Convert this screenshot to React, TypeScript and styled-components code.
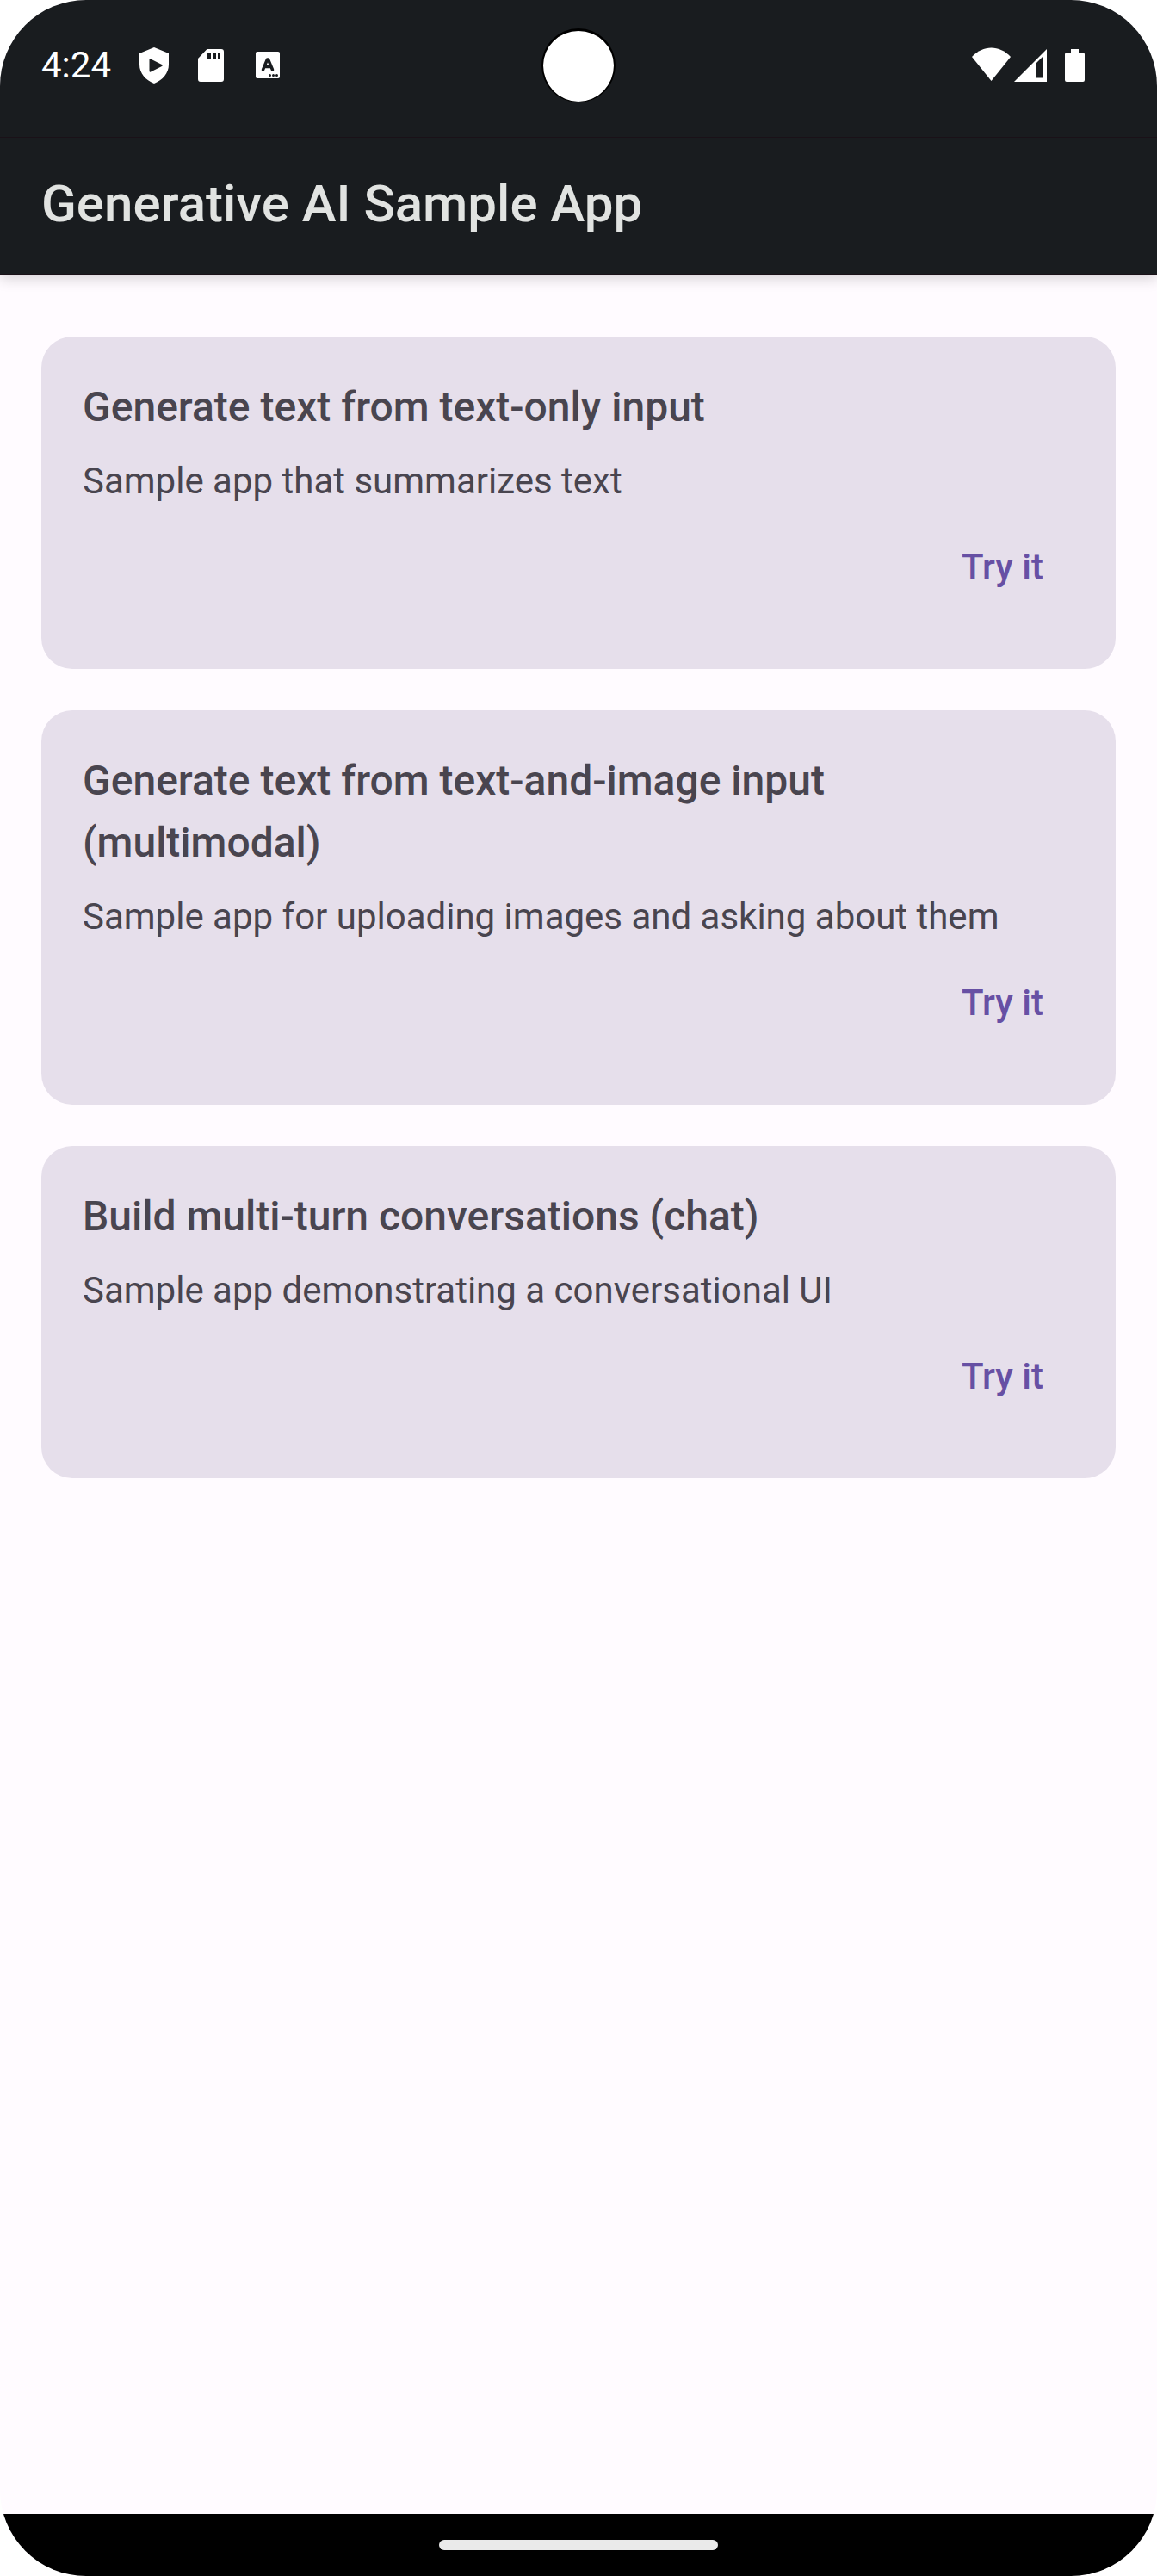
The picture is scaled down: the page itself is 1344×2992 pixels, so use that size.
import React from "react";
import styled, { createGlobalStyle } from "styled-components";

const GlobalStyle = createGlobalStyle`
  * { box-sizing: border-box; }
  body {
    margin: 0;
    background: #ffffff;
    font-family: Roboto, "Liberation Sans", sans-serif;
  }
`;

const Screen = styled.div`
  display: flex;
  flex-direction: column;
  min-height: 100vh;
  overflow: hidden;
  border-radius: 100px;
  background: #fffbff;
`;

const TopArea = styled.header`
  background: #191c1f;
  box-shadow: 0 5px 15px rgba(0, 0, 0, 0.16);
`;

const StatusBar = styled.div`
  display: grid;
  grid-template-columns: 1fr auto 1fr;
  align-items: center;
  height: 160px;
  padding: 0 48px;
  border-bottom: 1px solid #1a1118;
  color: #ffffff;
`;

const StatusGroup = styled.div<{ $end?: boolean }>`
  display: flex;
  align-items: center;
  justify-content: ${(p) => (p.$end ? "flex-end" : "flex-start")};
  padding-right: ${(p) => (p.$end ? "24px" : "0")};
  padding-bottom: 8px;
`;

const Clock = styled.time`
  margin-right: 29px;
  font-size: 42px;
  line-height: 50px;
`;

const StatusIcon = styled.svg`
  display: block;
  flex: none;
  fill: currentColor;
`;

const CameraCutout = styled.div`
  width: 86px;
  height: 86px;
  margin-bottom: 8px;
  border: solid #000000;
  border-width: 3px 2px 1px;
  border-radius: 50%;
  background: #ffffff;
`;

const AppBar = styled.div`
  display: flex;
  align-items: center;
  height: 159px;
  padding: 0 48px 4px;
  border-bottom: 1px solid #1a1118;
`;

const AppTitle = styled.h1`
  margin: 0;
  color: #e1e3e1;
  font-size: 60px;
  font-weight: 500;
  line-height: 72px;
`;

const CardList = styled.main`
  display: flex;
  flex: 1;
  flex-direction: column;
  gap: 48px;
  padding: 72px 48px;
`;

const Card = styled.article`
  display: flex;
  flex-direction: column;
  padding: 46px 48px 48px;
  border-radius: 36px;
  background: #e6dfeb;
  color: #49454f;
`;

const CardTitle = styled.h2`
  margin: 0;
  padding-right: 48px;
  font-size: 48px;
  font-weight: 500;
  line-height: 72px;
`;

const CardText = styled.p`
  margin: 20px 0 0;
  font-size: 42px;
  line-height: 60px;
`;

const TryButton = styled.button`
  align-self: flex-end;
  height: 120px;
  margin: 10px 0;
  padding: 0 36px;
  border: 0;
  background: transparent;
  color: #6750a4;
  font-family: inherit;
  font-size: 42px;
  font-weight: 500;
  line-height: 60px;
  cursor: pointer;
`;

const NavigationBar = styled.footer`
  display: flex;
  align-items: center;
  justify-content: center;
  height: 72px;
  background: #000000;
`;

const HomeHandle = styled.div`
  width: 324px;
  height: 12px;
  border-radius: 6px;
  background: #eaeaea;
`;

const samples = [
  {
    title: "Generate text from text-only input",
    text: "Sample app that summarizes text",
  },
  {
    title: "Generate text from text-and-image input (multimodal)",
    text: "Sample app for uploading images and asking about them",
  },
  {
    title: "Build multi-turn conversations (chat)",
    text: "Sample app demonstrating a conversational UI",
  },
];

function NotificationIcons() {
  return (
    <StatusIcon width="168" height="50" viewBox="0 0 168 50" aria-hidden="true">
      <path
        fillRule="evenodd"
        d="M21 4 38 11V24C38 34 31 42 21 46 11 42 4 34 4 24V11ZM17 17.500C16 17 15.500 17.500 15.500 18.500V31.500C15.500 32.500 16 33 17 32.500L30 26C31 25.500 31 24.500 30 24Z"
      />
      <path
        fillRule="evenodd"
        d="M82.500 6H99Q102 6 102 9V41Q102 44 99 44H75Q72 44 72 41V17ZM83 10V17H87V10ZM89 10V17H93V10ZM95 10V17H98V10Z"
      />
      <rect x="139" y="9" width="28" height="31" rx="2" />
      <path d="M147.500 30 152.500 18H153.500L158.500 30M149.500 26.500H156.500" fill="none" stroke="#191c1f" strokeWidth="3.500" strokeLinecap="round" strokeLinejoin="round" />
      <g fill="#191c1f">
        <circle cx="155.500" cy="36.500" r="1.500" />
        <circle cx="159.500" cy="36.500" r="1.500" />
        <circle cx="163.500" cy="36.500" r="1.500" />
      </g>
    </StatusIcon>
  );
}

function SystemIcons() {
  return (
    <StatusIcon width="144" height="50" viewBox="0 0 144 50" aria-hidden="true">
      <path d="M1 15C14 1 33 1 46 15L23.500 43Z" />
      <path fillRule="evenodd" d="M50 44 88 6V44ZM76 22V39.500H84V14Z" />
      <path d="M116 6H125V10H130Q132 10 132 12V42Q132 44 130 44H111Q109 44 109 42V12Q109 10 111 10H116Z" />
    </StatusIcon>
  );
}

export default function App() {
  return (
    <>
      <GlobalStyle />
      <Screen>
        <TopArea>
          <StatusBar>
            <StatusGroup>
              <Clock>4:24</Clock>
              <NotificationIcons />
            </StatusGroup>
            <CameraCutout />
            <StatusGroup $end>
              <SystemIcons />
            </StatusGroup>
          </StatusBar>
          <AppBar>
            <AppTitle>Generative AI Sample App</AppTitle>
          </AppBar>
        </TopArea>
        <CardList>
          {samples.map((sample) => (
            <Card key={sample.title}>
              <CardTitle>{sample.title}</CardTitle>
              <CardText>{sample.text}</CardText>
              <TryButton type="button">Try it</TryButton>
            </Card>
          ))}
        </CardList>
        <NavigationBar>
          <HomeHandle />
        </NavigationBar>
      </Screen>
    </>
  );
}
